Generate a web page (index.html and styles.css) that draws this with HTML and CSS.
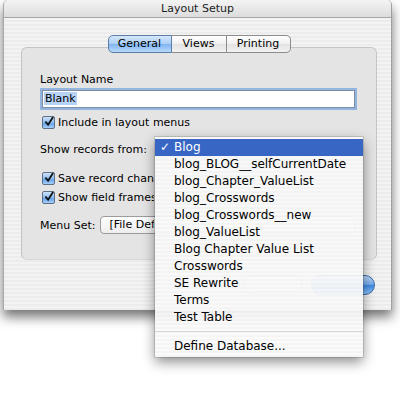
FILE: index.html
```html
<!DOCTYPE html>
<html lang="en">
<head>
  <meta charset="UTF-8">
  <title>Layout Setup</title>
  <link rel="stylesheet" href="styles.css">
</head>
<body>

<div class="window">
  <div class="titlebar">Layout Setup</div>

  <div class="content">
    <div class="tabs">
      <span class="tab tab-general active">General</span>
      <span class="tab tab-views">Views</span>
      <span class="tab tab-printing">Printing</span>
    </div>

    <div class="tabbox">
      <div class="label">Layout Name</div>
      <div class="textfield"><span class="selected-text">Blank</span></div>

      <div class="check check-first">
        <span class="checkbox"><svg width="11" height="11" viewBox="0 0 11 11"><path d="M1.5 5.5 L4.5 9 L10 0.5" fill="none" stroke="#111" stroke-width="2"/></svg></span>
        <span class="check-text">Include in layout menus</span>
      </div>

      <div class="row row-records">
        <span>Show records from:</span>
        <span class="popup popup-records"></span>
      </div>

      <div class="check check-save">
        <span class="checkbox"><svg width="11" height="11" viewBox="0 0 11 11"><path d="M1.5 5.5 L4.5 9 L10 0.5" fill="none" stroke="#111" stroke-width="2"/></svg></span>
        <span class="check-text clipped">Save record changes automatically</span>
      </div>
      <div class="check check-frames">
        <span class="checkbox"><svg width="11" height="11" viewBox="0 0 11 11"><path d="M1.5 5.5 L4.5 9 L10 0.5" fill="none" stroke="#111" stroke-width="2"/></svg></span>
        <span class="check-text clipped">Show field frames when record is active</span>
      </div>

      <div class="row row-menuset">
        <span>Menu Set:</span>
        <span class="popup popup-menuset"><span class="popup-text">[File Default]</span></span>
      </div>
    </div>

    <div class="buttons">
      <span class="button"></span>
      <span class="button default"></span>
    </div>
  </div>

  <div class="menu">
    <div class="item current"><span class="mark">&#10003;</span>Blog</div>
    <div class="item"><span class="mark"></span>blog_BLOG__selfCurrentDate</div>
    <div class="item"><span class="mark"></span>blog_Chapter_ValueList</div>
    <div class="item"><span class="mark"></span>blog_Crosswords</div>
    <div class="item"><span class="mark"></span>blog_Crosswords__new</div>
    <div class="item"><span class="mark"></span>blog_ValueList</div>
    <div class="item"><span class="mark"></span>Blog Chapter Value List</div>
    <div class="item"><span class="mark"></span>Crosswords</div>
    <div class="item"><span class="mark"></span>SE Rewrite</div>
    <div class="item"><span class="mark"></span>Terms</div>
    <div class="item"><span class="mark"></span>Test Table</div>
    <div class="separator"></div>
    <div class="item"><span class="mark"></span>Define Database...</div>
  </div>
</div>

</body>
</html>
```

FILE: styles.css
```css
html, body { margin: 0; height: 400px; background: #fff; }
body { font-family: "DejaVu Sans", sans-serif; font-size: 11px; color: #000; }

.window {
  position: relative;
  margin-left: 3px;
  width: 387px;
  height: 310px;
  border-left: 1px solid #a8a8a8;
  border-right: 1px solid #a0a0a0;
  border-radius: 5px 5px 0 0;
  background: repeating-linear-gradient(#ececec 0 2px, #f3f3f3 2px 4px);
  box-shadow: 0 7px 12px rgba(0,0,0,0.55);
}
.titlebar {
  height: 17px;
  line-height: 17px;
  text-align: center;
  border-bottom: 1px solid #a4a4a4;
  border-radius: 5px 5px 0 0;
  background: linear-gradient(#f4f4f4, #dcdcdc);
  color: #222;
}
.content { padding: 0 14px 15px 17px; }

.tabs { display: flex; justify-content: center; margin-top: 17px; height: 18px; position: relative; z-index: 1; }
.tab {
  height: 16px;
  line-height: 16px;
  text-align: center;
  border: 1px solid #8c8c8c;
  border-left: none;
  background: linear-gradient(#ffffff, #f0f0f0 50%, #e2e2e2 51%, #f2f2f2);
}
.tab-general { width: 62px; border-left: 1px solid #8c8c8c; border-radius: 5px 0 0 5px; }
.tab-views { width: 54px; }
.tab-printing { width: 63px; border-radius: 0 5px 5px 0; }
.tab.active { background: linear-gradient(#d7e8fc, #a9cdf6 50%, #7fb4f0 51%, #b8dafd); border-color: #5a7ea8; }

.tabbox {
  margin-top: -6px;
  height: 186px;
  padding: 25px 0 0 18px;
  border: 1px solid #c4c4c4;
  border-bottom-color: #d8d8d8;
  border-radius: 6px;
  background: #e4e4e4;
}
.label { line-height: 14px; }
.textfield {
  margin: 3px 0 0 2px;
  width: 310px;
  height: 16px;
  padding-left: 1px;
  border: 1px solid #7e8ea4;
  background: #fff;
  box-shadow: 0 0 0 2px #93b5dd;
  line-height: 16px;
}
.selected-text { background: #b6d2f5; padding: 0 1px; }

.check { display: flex; align-items: center; gap: 3px; height: 14px; margin-left: 2px; }
.check-first { margin-top: 7px; }
.check-save { margin-top: 13px; }
.check-frames { margin-top: 5px; }
.check-text { white-space: nowrap; }
.check-text.clipped { width: 96px; overflow: hidden; }
.checkbox {
  flex: none;
  width: 11px;
  height: 11px;
  border: 1px solid #5f6f86;
  border-radius: 2px;
  background: linear-gradient(#cfe2fa, #8fbdf2 50%, #5e9be6 51%, #a6d0fb);
  display: flex;
}
.checkbox svg { margin: -1px 0 0 1px; }

.row { display: flex; align-items: center; gap: 7px; height: 18px; }
.row-records { margin-top: 11px; }
.row-menuset { margin-top: 12px; }
.popup {
  height: 16px;
  line-height: 16px;
  border: 1px solid #9c9c9c;
  border-radius: 4px;
  background: linear-gradient(#ffffff, #eeeeee);
  position: relative;
}
.popup-records { width: 140px; margin-left: 2px; }
.popup-menuset { width: 253px; margin-left: -2px; }
.popup-text { display: block; width: 45px; padding-left: 8px; overflow: hidden; white-space: nowrap; }

.buttons { display: flex; justify-content: flex-end; gap: 8px; margin-top: 15px; padding-right: 2px; }
.button {
  width: 58px;
  height: 18px;
  border: 1px solid #9a9a9a;
  border-radius: 10px;
  background: linear-gradient(#ffffff, #e6e6e6);
}
.button.default { width: 62px; border-color: #3d6aa8; background: linear-gradient(#bcd9fb, #6fa8ee 50%, #3f88e4 51%, #8ec6fb); }

.menu {
  position: absolute;
  left: 151px;
  top: 137px;
  width: 208px;
  padding: 2px 0;
  background: repeating-linear-gradient(rgba(250,250,250,0.94) 0 2px, rgba(244,244,244,0.94) 2px 4px);
  box-shadow: 0 5px 12px rgba(0,0,0,0.45), 0 0 0 1px rgba(0,0,0,0.12);
  font-size: 12px;
}
.item { display: flex; height: 17px; line-height: 17px; }
.item .mark { width: 19px; padding-left: 5px; box-sizing: border-box; }
.item.current { background: #3866c4; color: #fff; }
.separator { height: 1px; background: #d6d6d6; margin: 5px 0 6px; }
```
